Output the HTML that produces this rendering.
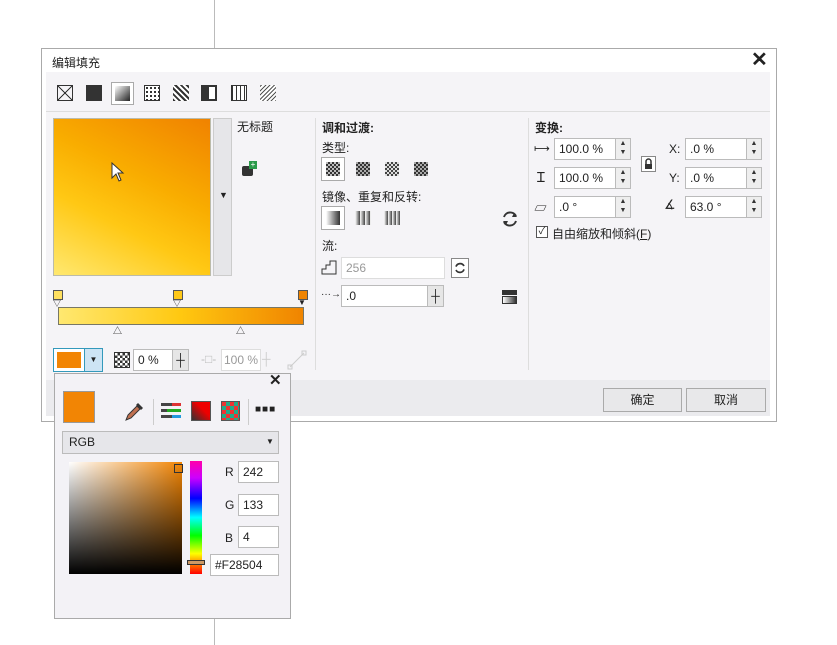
<!DOCTYPE html>
<html><head><meta charset="utf-8"><style>
*{box-sizing:border-box;margin:0;padding:0}
body{width:837px;height:645px;background:#fff;position:relative;overflow:hidden;font-family:"Liberation Sans","Noto Sans CJK SC",sans-serif;font-size:12px;color:#222}
.a{position:absolute}
.inp{position:absolute;background:#fff;border:1px solid #bbb;font-size:12px;padding:3px 4px;height:22px;white-space:nowrap;overflow:hidden}
.spin{position:absolute;width:16px;height:22px;background:#eee;border:1px solid #bbb;font-size:7px;line-height:9px;text-align:center;color:#333}
.t{position:absolute;white-space:nowrap}
</style></head><body>
<div class="a" style="left:214px;top:0;width:1px;height:48px;background:#bbb"></div>
<div class="a" style="left:214px;top:618px;width:1px;height:27px;background:#bbb"></div>
<div class="a" style="left:41px;top:48px;width:736px;height:374px;border:1px solid #aaa;background:#fff"></div>
<div class="t" style="left:52px;top:54px;font-size:12px">编辑填充</div>
<div class="t" style="left:751px;top:47px;font-size:20px;font-weight:bold">✕</div>
<div class="a" style="left:46px;top:72px;width:724px;height:308px;background:#f5f4f7"></div>
<div class="a" style="left:46px;top:380px;width:724px;height:36px;background:#ebebee"></div>
<div class="a" style="left:57px;top:85px;width:16px;height:16px;border:1px solid #333;background:linear-gradient(45deg,transparent 47%,#333 47%,#333 53%,transparent 53%),linear-gradient(-45deg,transparent 47%,#333 47%,#333 53%,transparent 53%)"></div>
<div class="a" style="left:86px;top:85px;width:16px;height:16px;background:#333"></div>
<div class="a" style="left:111px;top:82px;width:23px;height:23px;border:1px solid #aaa;background:#fff"></div>
<div class="a" style="left:115px;top:86px;width:15px;height:15px;background:linear-gradient(135deg,#fff,#222)"></div>
<div class="a" style="left:144px;top:85px;width:16px;height:16px;background:radial-gradient(circle,#333 40%,#fff 45%) 0 0/4px 4px;border:1px solid #333"></div>
<div class="a" style="left:173px;top:85px;width:16px;height:16px;background:repeating-linear-gradient(45deg,#333 0 2px,#fff 2px 4px)"></div>
<div class="a" style="left:201px;top:85px;width:16px;height:16px;border:2px solid #333;background:linear-gradient(90deg,#333 50%,#fff 50%)"></div>
<div class="a" style="left:231px;top:85px;width:16px;height:16px;border:1px solid #333;background:repeating-linear-gradient(90deg,#333 0 1px,#fff 1px 4px)"></div>
<div class="a" style="left:260px;top:85px;width:16px;height:16px;background:repeating-linear-gradient(-45deg,#555 0 1px,#fff 1px 3px)"></div>
<div class="a" style="left:46px;top:111px;width:724px;height:1px;background:#ddd"></div>
<div class="a" style="left:53px;top:118px;width:158px;height:158px;border:1px solid #bba;background:linear-gradient(27deg,#ffe870 0%,#ffc814 35%,#f9ad00 60%,#f08200 100%)"></div>
<svg class="a" style="left:111px;top:162px" width="14" height="20" viewBox="0 0 14 20"><path d="M1 1 L1 16 L5 12 L8 19 L10 18 L7 11 L12 11 Z" fill="#fff" stroke="#333" stroke-width="1"/></svg>
<div class="a" style="left:213px;top:118px;width:19px;height:158px;background:#e6e6e9;border:1px solid #ccc"></div>
<div class="t" style="left:219px;top:190px;font-size:9px">▼</div>
<div class="t" style="left:237px;top:118px">无标题</div>
<div class="a" style="left:242px;top:166px;width:11px;height:10px;background:#333;border-radius:2px"></div>
<div class="a" style="left:249px;top:161px;width:8px;height:8px;background:#2a9a4a;color:#fff;font-size:8px;line-height:8px;text-align:center">+</div>
<div class="a" style="left:53px;top:290px;width:10px;height:10px;background:#ffe060;border:1px solid #555"></div>
<div class="a" style="left:173px;top:290px;width:10px;height:10px;background:#ffc818;border:1px solid #555"></div>
<div class="a" style="left:298px;top:290px;width:10px;height:10px;background:#f08400;border:1px solid #555"></div>
<div class="t" style="left:53px;top:298px;font-size:8px">▽</div>
<div class="t" style="left:173px;top:298px;font-size:8px">▽</div>
<div class="t" style="left:298px;top:298px;font-size:8px">▼</div>
<div class="a" style="left:58px;top:307px;width:246px;height:18px;border:1px solid #776;background:linear-gradient(90deg,#ffe870,#ffc810 50%,#f08400)"></div>
<div class="t" style="left:113px;top:324px;font-size:9px">△</div>
<div class="t" style="left:236px;top:324px;font-size:9px">△</div>
<div class="a" style="left:53px;top:348px;width:32px;height:24px;border:1px solid #39b;background:#fff"></div>
<div class="a" style="left:57px;top:352px;width:24px;height:16px;background:#f28504"></div>
<div class="a" style="left:84px;top:348px;width:19px;height:24px;border:1px solid #39b;background:#cde4f4;font-size:8px;text-align:center;line-height:22px">▼</div>
<div class="a" style="left:114px;top:352px;width:16px;height:16px;background:repeating-conic-gradient(#333 0 25%,#fff 0 50%) 0 0/5px 5px;border:1px solid #333"></div>
<div class="inp" style="left:133px;top:349px;width:40px">0 %</div>
<div class="a" style="left:172px;top:349px;width:17px;height:22px;background:#e6e6e6;border:1px solid #bbb;text-align:center;line-height:20px">┼</div>
<div class="t" style="left:201px;top:352px;color:#bbb">-□-</div>
<div class="inp" style="left:221px;top:349px;width:40px;color:#999;border-color:#ddd;padding:3px 2px">100 %</div>
<div class="t" style="left:262px;top:352px;color:#ccc">┼</div>
<svg class="a" style="left:287px;top:350px" width="20" height="20"><line x1="3" y1="17" x2="17" y2="3" stroke="#ccc"/><rect x="1" y="15" width="4" height="4" fill="none" stroke="#ccc"/><rect x="15" y="1" width="4" height="4" fill="none" stroke="#ccc"/></svg>
<div class="a" style="left:315px;top:118px;width:1px;height:252px;background:#ddd"></div>
<div class="a" style="left:528px;top:118px;width:1px;height:252px;background:#ddd"></div>
<div class="t" style="left:322px;top:119px;font-weight:bold">调和过渡:</div>
<div class="t" style="left:322px;top:139px">类型:</div>
<div class="a" style="left:321px;top:157px;width:24px;height:24px;border:1px solid #aaa;background:#fff"></div>
<div class="a" style="left:326px;top:162px;width:14px;height:14px;background:repeating-conic-gradient(#333 0 25%,#bbb 0 50%) 0 0/4px 4px"></div>
<div class="a" style="left:356px;top:162px;width:14px;height:14px;background:repeating-conic-gradient(#333 0 25%,#aaa 0 50%) 0 0/4px 4px"></div>
<div class="a" style="left:385px;top:162px;width:14px;height:14px;background:repeating-conic-gradient(#444 0 25%,#ddd 0 50%) 0 0/4px 4px"></div>
<div class="a" style="left:414px;top:162px;width:14px;height:14px;background:repeating-conic-gradient(#333 0 25%,#aaa 0 50%) 0 0/4px 4px"></div>
<div class="t" style="left:322px;top:188px">镜像、重复和反转:</div>
<div class="a" style="left:321px;top:206px;width:24px;height:24px;border:1px solid #aaa;background:#fff"></div>
<div class="a" style="left:326px;top:211px;width:14px;height:14px;background:linear-gradient(90deg,#fff,#333)"></div>
<div class="a" style="left:355px;top:211px;width:16px;height:14px;background:repeating-linear-gradient(90deg,#fff 0,#444 5px,#fff 5px)"></div>
<div class="a" style="left:384px;top:211px;width:16px;height:14px;background:repeating-linear-gradient(90deg,#fff 0,#444 4px,#fff 4px)"></div>
<svg class="a" style="left:501px;top:210px" width="18" height="18" viewBox="0 0 18 18"><path d="M3 7 A6.5 6.5 0 0 1 15 6 M15 11 A6.5 6.5 0 0 1 3 12" fill="none" stroke="#333" stroke-width="2"/><path d="M13 3 L16 7 L11 7Z M5 15 L2 11 L7 11Z" fill="#333"/></svg>
<div class="t" style="left:322px;top:237px">流:</div>
<svg class="a" style="left:321px;top:259px" width="16" height="16"><path d="M1 15 L1 10 L5 10 L5 6 L9 6 L9 2 L15 2 L15 15 Z" fill="none" stroke="#333"/></svg>
<div class="inp" style="left:341px;top:257px;width:104px;color:#999;border-color:#ddd">256</div>
<div class="a" style="left:451px;top:258px;width:18px;height:20px;border:1px solid #888;background:#fff"></div>
<svg class="a" style="left:454px;top:262px" width="12" height="12" viewBox="0 0 18 18"><path d="M3 7 A6.5 6.5 0 0 1 15 6 M15 11 A6.5 6.5 0 0 1 3 12" fill="none" stroke="#333" stroke-width="2.5"/></svg>
<div class="t" style="left:321px;top:289px;font-size:10px">···→</div>
<div class="inp" style="left:341px;top:285px;width:88px">.0</div>
<div class="a" style="left:427px;top:285px;width:17px;height:22px;background:#e6e6e6;border:1px solid #bbb;text-align:center;line-height:20px">┼</div>
<div class="a" style="left:502px;top:290px;width:15px;height:5px;background:#333"></div>
<div class="a" style="left:502px;top:296px;width:15px;height:8px;border:1px solid #333;background:linear-gradient(90deg,#fff,#333)"></div>
<div class="t" style="left:535px;top:119px;font-weight:bold">变换:</div>
<div class="t" style="left:534px;top:142px;font-size:11px">⟼</div>
<div class="inp" style="left:554px;top:138px;width:62px">100.0 %</div>
<div class="spin" style="left:615px;top:138px">▲<br>▼</div>
<div class="t" style="left:537px;top:168px;font-size:14px">Ɪ</div>
<div class="inp" style="left:554px;top:167px;width:62px">100.0 %</div>
<div class="spin" style="left:615px;top:167px">▲<br>▼</div>
<div class="t" style="left:534px;top:198px;font-size:13px">▱</div>
<div class="inp" style="left:554px;top:196px;width:62px">.0 °</div>
<div class="spin" style="left:615px;top:196px">▲<br>▼</div>
<div class="a" style="left:641px;top:156px;width:15px;height:16px;border:1px solid #888;background:#fff"></div>
<svg class="a" style="left:643px;top:158px" width="11" height="12"><path d="M3 6 V3.5 A2.5 2.5 0 0 1 8 3.5 V6" fill="none" stroke="#333" stroke-width="1.5"/><rect x="2" y="6" width="7" height="5" fill="#333"/></svg>
<div class="t" style="left:669px;top:142px">X:</div>
<div class="inp" style="left:685px;top:138px;width:62px">.0 %</div>
<div class="spin" style="left:746px;top:138px">▲<br>▼</div>
<div class="t" style="left:669px;top:171px">Y:</div>
<div class="inp" style="left:685px;top:167px;width:62px">.0 %</div>
<div class="spin" style="left:746px;top:167px">▲<br>▼</div>
<div class="t" style="left:664px;top:197px;font-size:13px">∡</div>
<div class="inp" style="left:685px;top:196px;width:62px">63.0 °</div>
<div class="spin" style="left:746px;top:196px">▲<br>▼</div>
<div class="a" style="left:536px;top:226px;width:12px;height:12px;border:1px solid #555;background:#fff;font-size:10px;line-height:10px;text-align:center">✓</div>
<div class="t" style="left:552px;top:225px">自由缩放和倾斜(<u>F</u>)</div>
<div class="a" style="left:603px;top:388px;width:79px;height:24px;border:1px solid #aaa;background:#e8e8ea;text-align:center;line-height:22px">确定</div>
<div class="a" style="left:686px;top:388px;width:80px;height:24px;border:1px solid #aaa;background:#e8e8ea;text-align:center;line-height:22px">取消</div>
<div class="a" style="left:54px;top:373px;width:237px;height:246px;border:1px solid #aaa;background:#f3f2f6"></div>
<div class="t" style="left:269px;top:371px;font-size:15px;font-weight:bold">✕</div>
<div class="a" style="left:63px;top:391px;width:32px;height:32px;background:#f28504;border:1px solid #999"></div>
<svg class="a" style="left:124px;top:400px" width="22" height="22"><path d="M2 20 L4 15 L13 6 L16 9 L7 18 Z" fill="#c07050" stroke="#333"/><path d="M14 3 L19 8 L17 10 L12 5 Z" fill="#333"/></svg>
<div class="a" style="left:153px;top:399px;width:1px;height:26px;background:#ccc"></div>
<div class="a" style="left:161px;top:403px;width:20px;height:3px;background:linear-gradient(90deg,#444 55%,#d33 55%)"></div>
<div class="a" style="left:161px;top:409px;width:20px;height:3px;background:linear-gradient(90deg,#444 30%,#2a2 30%)"></div>
<div class="a" style="left:161px;top:415px;width:20px;height:3px;background:linear-gradient(90deg,#444 55%,#29d 55%)"></div>
<div class="a" style="left:191px;top:401px;width:20px;height:20px;border:1px solid #555;background:linear-gradient(45deg,#333,#e00 60%)"></div>
<div class="a" style="left:221px;top:401px;width:19px;height:20px;border:1px solid #555;background:repeating-conic-gradient(#2a8 0 25%,#e33 0 50%) 0 0/8px 8px"></div>
<div class="a" style="left:248px;top:399px;width:1px;height:26px;background:#ccc"></div>
<div class="t" style="left:255px;top:404px;font-size:10px;letter-spacing:1px;font-weight:bold">■■■</div>
<div class="a" style="left:62px;top:431px;width:217px;height:23px;border:1px solid #bbb;background:#e6e6ea;padding:3px 6px">RGB</div>
<div class="t" style="left:266px;top:437px;font-size:8px">▼</div>
<div class="a" style="left:69px;top:462px;width:113px;height:112px;background:linear-gradient(to bottom,transparent,#000),linear-gradient(90deg,#fff,#f28504)"></div>
<div class="a" style="left:174px;top:464px;width:9px;height:9px;border:1px solid #333"></div>
<div class="a" style="left:190px;top:461px;width:12px;height:113px;background:linear-gradient(to bottom,#f0a,#c0f 15%,#00f 33%,#0ff 50%,#0f0 66%,#ff0 82%,#f00)"></div>
<div class="a" style="left:187px;top:560px;width:18px;height:5px;border:1px solid #333;background:#c96"></div>
<div class="t" style="left:225px;top:465px">R</div>
<div class="inp" style="left:238px;top:461px;width:41px">242</div>
<div class="t" style="left:225px;top:498px">G</div>
<div class="inp" style="left:238px;top:494px;width:41px">133</div>
<div class="t" style="left:225px;top:531px">B</div>
<div class="inp" style="left:238px;top:526px;width:41px">4</div>
<div class="inp" style="left:210px;top:554px;width:69px">#F28504</div>
</body></html>
